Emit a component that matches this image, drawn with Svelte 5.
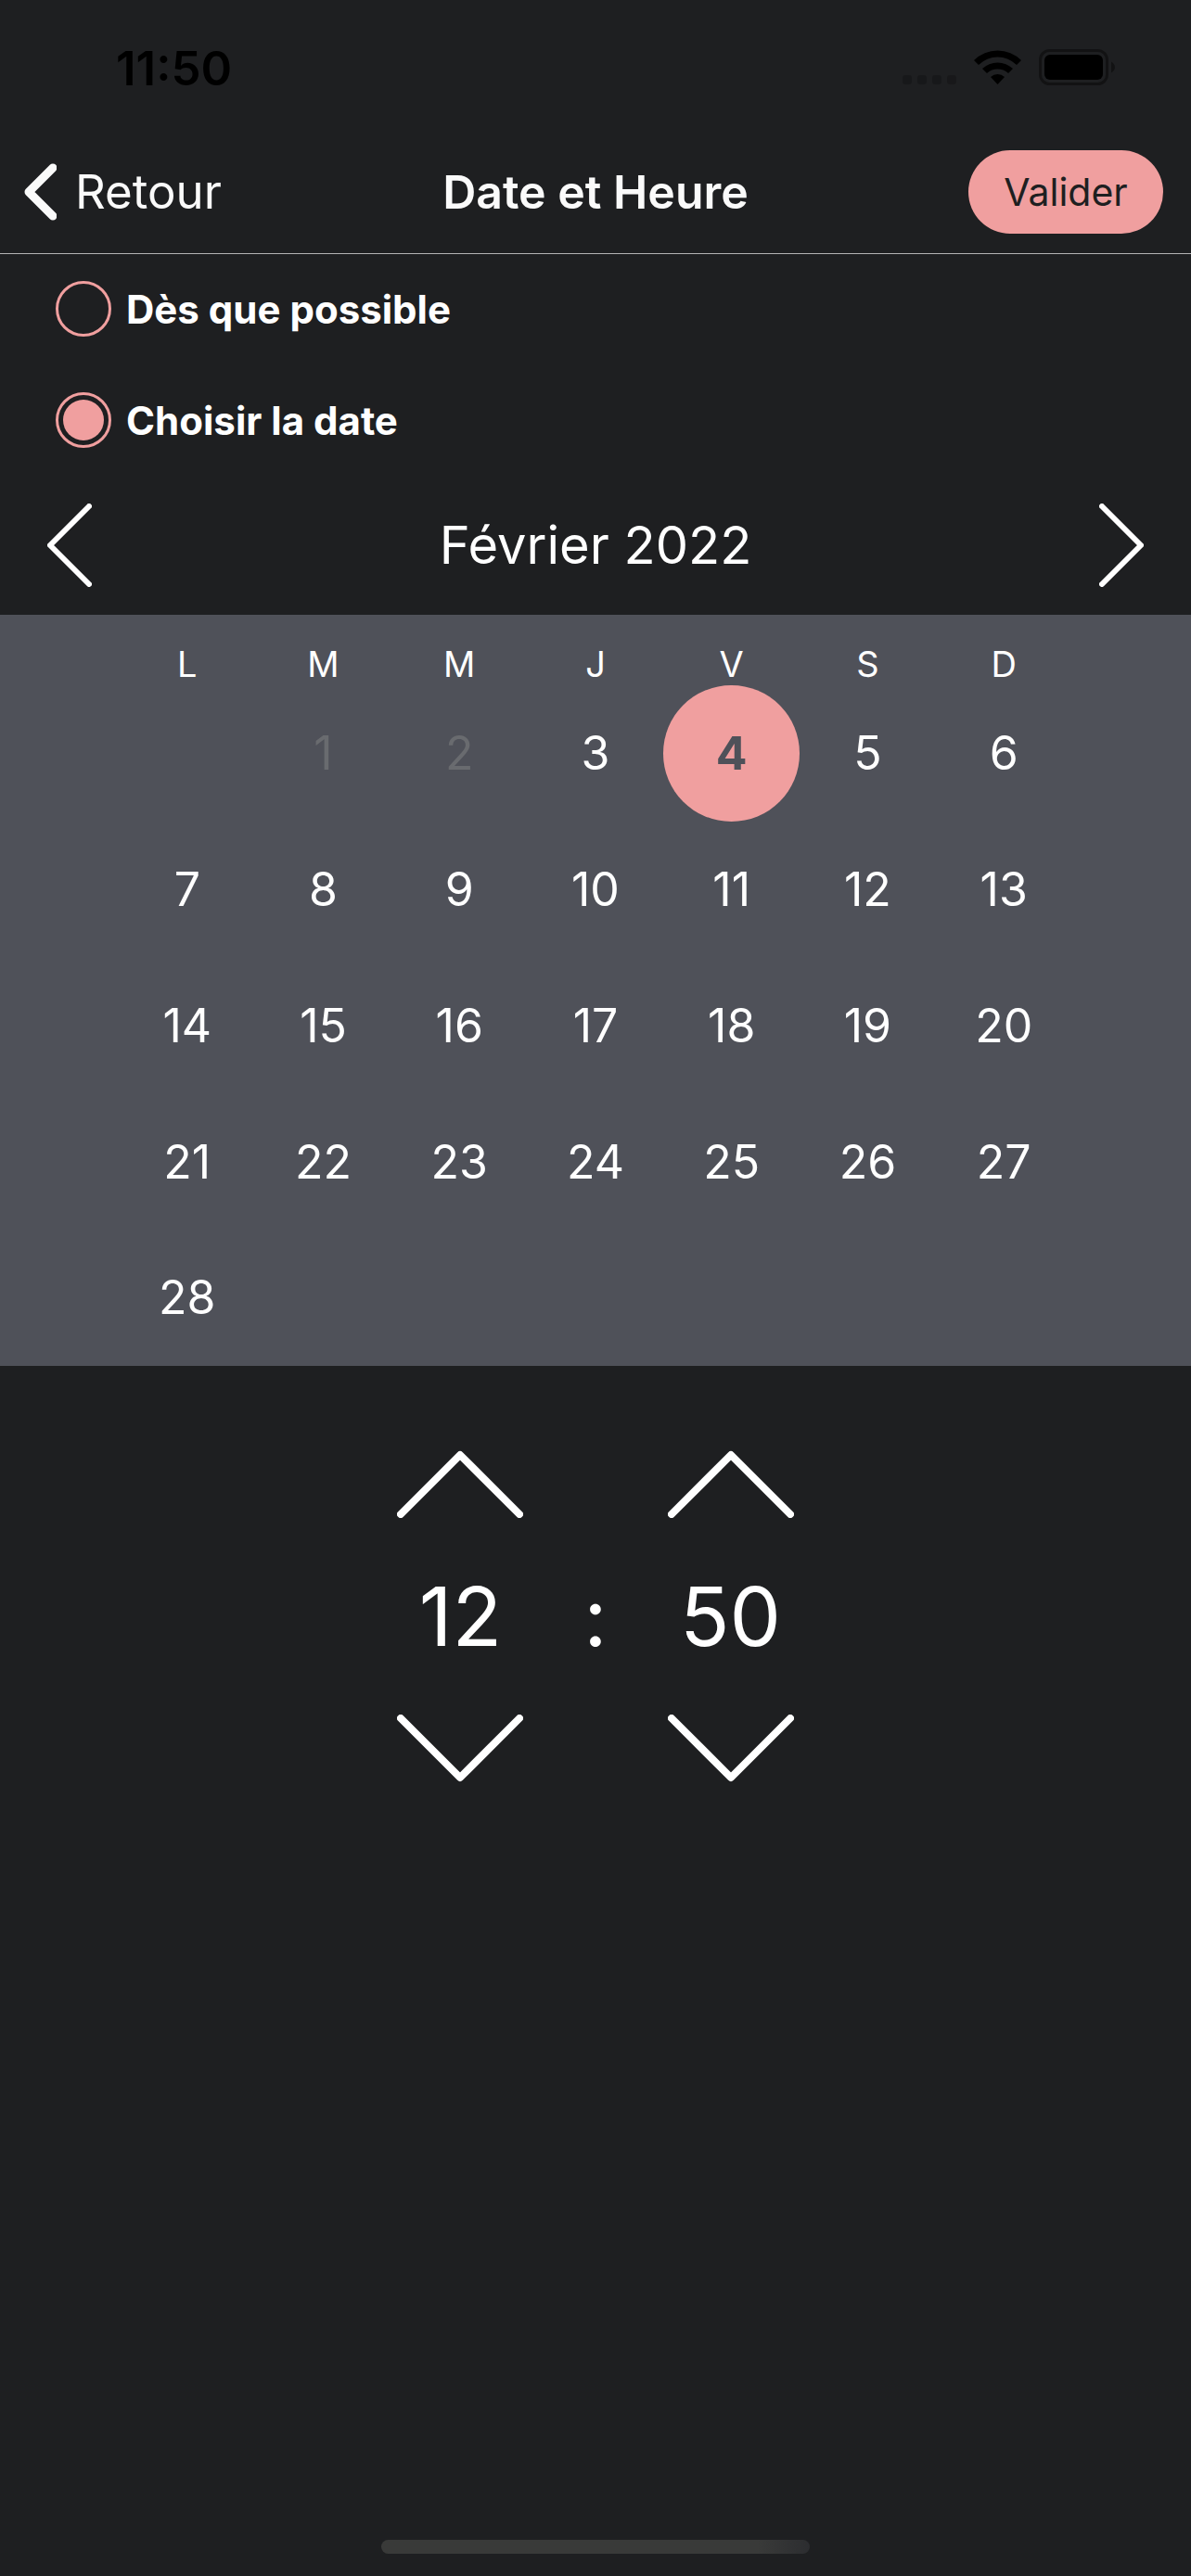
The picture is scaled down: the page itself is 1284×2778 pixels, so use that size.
<script lang="ts">
	const weekdays = ['L', 'M', 'M', 'J', 'V', 'S', 'D'];
	const months = [
		'Janvier', 'Février', 'Mars', 'Avril', 'Mai', 'Juin', 'Juillet',
		'Août', 'Septembre', 'Octobre', 'Novembre', 'Décembre'
	];

	let mode = $state('date');
	let year = $state(2022);
	let month = $state(1);
	let selected = $state(4);
	let hour = $state(12);
	let minute = $state(50);

	// first bookable day
	const minDate = new Date(2022, 1, 3);

	let weeks = $derived.by(() => {
		const offset = (new Date(year, month, 1).getDay() + 6) % 7;
		const count = new Date(year, month + 1, 0).getDate();
		const rows: number[][] = [];
		for (let start = 1 - offset; start <= count; start += 7) {
			rows.push(weekdays.map((_, i) => (start + i > 0 && start + i <= count ? start + i : 0)));
		}
		return rows;
	});

	function shiftMonth(step: number) {
		const next = new Date(year, month + step, 1);
		year = next.getFullYear();
		month = next.getMonth();
		selected = 0;
	}

	function shiftHour(step: number) {
		hour = (hour + step + 24) % 24;
	}

	function shiftMinute(step: number) {
		minute = (minute + step + 60) % 60;
	}

	const pad = (n: number) => String(n).padStart(2, '0');
</script>

{#snippet arrow(up: boolean)}
	<svg class="arrow" viewBox="0 0 136 73" aria-hidden="true">
		<polyline points={up ? '4,69 68,5 132,69' : '4,4 68,68 132,4'} />
	</svg>
{/snippet}

{#snippet spinner(label: string, value: number, shift: (step: number) => void)}
	<div class="spinner">
		<button type="button" aria-label="{label} suivante" onclick={() => shift(1)}>{@render arrow(true)}</button>
		<span class="digits">{pad(value)}</span>
		<button type="button" aria-label="{label} précédente" onclick={() => shift(-1)}>{@render arrow(false)}</button>
	</div>
{/snippet}

<div class="screen">
	<div class="status">
		<span class="clock">11:50</span>
		<svg class="status-icons" viewBox="0 0 230 40" aria-hidden="true">
			<g opacity="0.2">
				<rect x="0" y="28" width="10" height="10" rx="3" />
				<rect x="16" y="28" width="10" height="10" rx="3" />
				<rect x="32" y="28" width="10" height="10" rx="3" />
				<rect x="48" y="28" width="10" height="10" rx="3" />
			</g>
			<path d="M77 12 A36 36 0 0 1 128 12 L123 17 A29 29 0 0 0 82 17 Z" />
			<path d="M86 21 A24 24 0 0 1 119 21 L114 26 A17 17 0 0 0 91 26 Z" />
			<path d="M95 30 A11 11 0 0 1 110 30 L102.500 38 Z" />
			<rect x="148.500" y="1.500" width="72" height="36" rx="10" fill="none" stroke="#000" stroke-width="3" opacity="0.4" />
			<rect x="153" y="6" width="63" height="27" rx="6" />
			<path d="M225 13.500 Q229 16 229 19.500 Q229 23 225 25.500 Z" opacity="0.4" />
		</svg>
	</div>

	<header>
		<button type="button" class="back">
			<svg viewBox="0 0 36 62" aria-hidden="true"><polyline points="32,5 6,31 32,57" /></svg>
			Retour
		</button>
		<h1>Date et Heure</h1>
		<button type="button" class="submit">Valider</button>
	</header>

	<main>
		<div class="options">
			<label><input type="radio" name="mode" value="asap" bind:group={mode} />Dès que possible</label>
			<label><input type="radio" name="mode" value="date" bind:group={mode} />Choisir la date</label>
		</div>

		<div class="month">
			<button type="button" aria-label="Mois précédent" onclick={() => shiftMonth(-1)}>
				<svg viewBox="0 0 48 90" aria-hidden="true"><polyline points="45,3 3,45 45,87" /></svg>
			</button>
			<h2>{months[month]} {year}</h2>
			<button type="button" aria-label="Mois suivant" onclick={() => shiftMonth(1)}>
				<svg viewBox="0 0 48 90" aria-hidden="true"><polyline points="3,3 45,45 3,87" /></svg>
			</button>
		</div>

		<div class="calendar">
			<table>
				<thead>
					<tr>
						{#each weekdays as day}
							<th scope="col">{day}</th>
						{/each}
					</tr>
				</thead>
				<tbody>
					{#each weeks as week}
						<tr>
							{#each week as day}
								<td>
									{#if day}
										<button
											type="button"
											class="day"
											class:selected={day === selected}
											disabled={new Date(year, month, day) < minDate}
											onclick={() => (selected = day)}
										>{day}</button>
									{/if}
								</td>
							{/each}
						</tr>
					{/each}
				</tbody>
			</table>
		</div>

		<div class="time">
			{@render spinner('Heure', hour, shiftHour)}
			<span class="digits">:</span>
			{@render spinner('Minute', minute, shiftMinute)}
		</div>
	</main>

	<div class="home-indicator"></div>
</div>

<style>
	:global(body) {
		background: #1e1f21;
	}

	.screen {
		--accent: #f09f9f;
		--panel: #4f5159;
		min-height: 100vh;
		box-sizing: border-box;
		display: flex;
		flex-direction: column;
		padding-bottom: 24px;
		background: #1e1f21;
		color: #fff;
		font-family: Inter, 'Liberation Sans', sans-serif;
		font-size: 50px;
	}

	button {
		padding: 0;
		border: none;
		background: none;
		color: inherit;
		font: inherit;
		cursor: pointer;
	}

	svg {
		display: block;
	}

	polyline {
		fill: none;
		stroke: currentColor;
		stroke-width: 6;
		stroke-linecap: round;
		stroke-linejoin: round;
	}

	.status {
		display: flex;
		align-items: center;
		justify-content: space-between;
		height: 144px;
		box-sizing: border-box;
		padding: 2px 81px 0 125px;
		color: #000;
	}

	.clock {
		font-size: 51px;
		font-weight: 600;
	}

	.status-icons {
		width: 230px;
		height: 40px;
	}

	header {
		display: grid;
		grid-template-columns: 1fr auto 1fr;
		align-items: center;
		height: 130px;
		box-sizing: border-box;
		padding: 0 25px 4px;
		border-bottom: 1px solid #b4b4b5;
		color: #fafafa;
	}

	.back {
		justify-self: start;
		display: flex;
		align-items: center;
		gap: 20px;
		font-size: 51px;
	}

	.back svg {
		width: 36px;
		height: 62px;
	}

	.back polyline {
		stroke-width: 9;
	}

	h1 {
		margin: 0;
		font-size: 50px;
		font-weight: 600;
	}

	.submit {
		justify-self: end;
		width: 210px;
		height: 90px;
		margin-right: 5px;
		border-radius: 45px;
		background: var(--accent);
		color: #1e1f21;
		font-size: 41px;
	}

	.options label {
		display: flex;
		align-items: center;
		gap: 16px;
		height: 120px;
		box-sizing: border-box;
		padding: 0 60px 2px;
		font-size: 42px;
		font-weight: 700;
	}

	input[type='radio'] {
		appearance: none;
		width: 60px;
		height: 60px;
		margin: 0;
		box-sizing: border-box;
		padding: 5px;
		border: 3px solid var(--accent);
		border-radius: 50%;
	}

	input[type='radio']:checked {
		background: var(--accent) content-box;
	}

	.month {
		display: flex;
		align-items: center;
		justify-content: space-between;
		height: 149px;
		box-sizing: border-box;
		padding: 0 51px 2px;
	}

	.month svg {
		width: 48px;
		height: 90px;
	}

	h2 {
		margin: 0;
		font-size: 56px;
		font-weight: 400;
	}

	.calendar {
		background: var(--panel);
	}

	table {
		width: 80%;
		margin: 0 auto;
		table-layout: fixed;
		border-collapse: collapse;
	}

	th {
		height: 76px;
		box-sizing: border-box;
		padding: 29px 0 0;
		font-size: 38px;
		font-weight: 400;
		line-height: 46px;
	}

	td {
		padding: 0;
	}

	.day {
		display: block;
		width: 100%;
		aspect-ratio: 1;
		border-radius: 50%;
	}

	.day:disabled {
		color: #696b6f;
	}

	.day.selected {
		background: var(--accent);
		color: var(--panel);
		font-weight: 700;
	}

	.time {
		display: grid;
		grid-template-columns: repeat(3, 1fr);
		align-items: center;
		width: 34%;
		margin: 91px auto 0;
		text-align: center;
	}

	.spinner {
		display: flex;
		flex-direction: column;
		align-items: center;
		gap: 52px;
	}

	.arrow {
		width: 136px;
		height: 73px;
	}

	.arrow polyline {
		stroke-width: 8;
	}

	.digits {
		font-size: 88px;
		line-height: 108px;
	}

	.home-indicator {
		width: 36%;
		height: 15px;
		margin: auto auto 0;
		border-radius: 8px;
		background: linear-gradient(to right, #393a39 88%, #2c2d30);
	}
</style>
